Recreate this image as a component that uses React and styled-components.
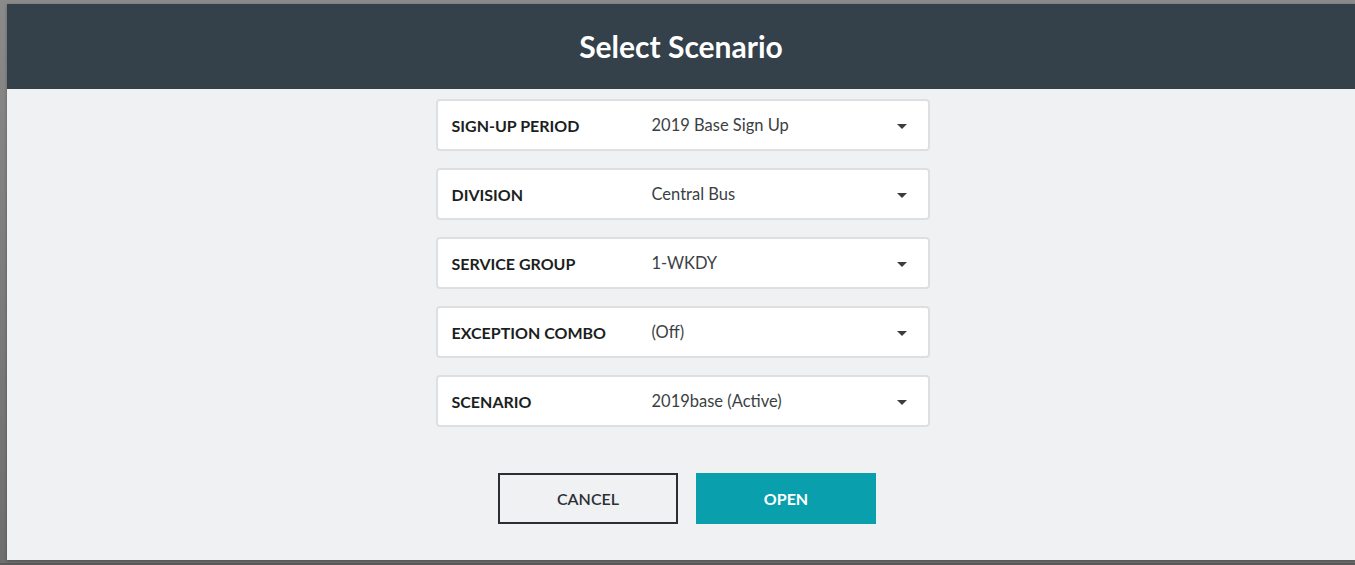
import React from 'react'
import styled, { createGlobalStyle } from 'styled-components'

const GlobalStyle = createGlobalStyle`
  html, body {
    margin: 0;
    padding: 0;
  }
  body {
    font-family: Lato, "Open Sans", sans-serif;
  }
`

const Backdrop = styled.div`
  height: 565px;
  box-sizing: border-box;
  padding: 4px 0 3px 7px;
  background: linear-gradient(#8a8a8a, #6e6e6e);
  border-bottom: 2px solid #5a5a5a;
  display: flex;
`

const Dialog = styled.div`
  flex: 1;
  display: flex;
  flex-direction: column;
  background: #f0f1f3;
  box-shadow: 0 1px 3px rgba(0, 0, 0, 0.3);
`

const Header = styled.div`
  height: 85px;
  background: #34404a;
  display: flex;
  align-items: center;
  justify-content: center;
`

const Title = styled.h1`
  margin: 0 0 2px;
  color: #fff;
  font-size: 30px;
  font-weight: 700;
`

const Body = styled.div`
  display: flex;
  flex-direction: column;
  align-items: center;
  padding: 10px 0 0 3px;
`

const Fields = styled.div`
  display: flex;
  flex-direction: column;
  gap: 17px;
  width: 494px;
`

const Field = styled.div`
  height: 52px;
  box-sizing: border-box;
  background: #fff;
  border: 2px solid #dedfe1;
  border-radius: 4px;
  display: flex;
  align-items: center;
  padding: 0 21px 0 14px;
`

const Label = styled.span`
  width: 200px;
  font-size: 16px;
  font-weight: 700;
  color: #1c1f22;
`

const Value = styled.span`
  flex: 1;
  font-size: 16.5px;
  color: #3b3f43;
`

const Caret = styled.span`
  width: 0;
  height: 0;
  border-left: 5px solid transparent;
  border-right: 5px solid transparent;
  border-top: 5px solid #3a3d40;
  margin-top: 2px;
`

const Actions = styled.div`
  display: flex;
  gap: 18px;
  margin: 46px 0 0 9px;
`

const Button = styled.button`
  width: 180px;
  height: 51px;
  box-sizing: border-box;
  font-family: Lato, "Open Sans", sans-serif;
  font-size: 16px;
  font-weight: ${p => (p.$primary ? 700 : 600)};
  text-transform: uppercase;
  cursor: pointer;
  background: ${p => (p.$primary ? '#0a9fad' : 'transparent')};
  color: ${p => (p.$primary ? '#fff' : '#2c3035')};
  border: ${p => (p.$primary ? 'none' : '2px solid #2a2f34')};
`

const fields = [
  ['SIGN-UP PERIOD', '2019 Base Sign Up'],
  ['DIVISION', 'Central Bus'],
  ['SERVICE GROUP', '1-WKDY'],
  ['EXCEPTION COMBO', '(Off)'],
  ['SCENARIO', '2019base (Active)'],
]

export default function App() {
  return (
    <Backdrop>
      <GlobalStyle />
      <Dialog>
        <Header>
          <Title>Select Scenario</Title>
        </Header>
        <Body>
          <Fields>
            {fields.map(([label, value]) => (
              <Field key={label}>
                <Label>{label}</Label>
                <Value>{value}</Value>
                <Caret />
              </Field>
            ))}
          </Fields>
          <Actions>
            <Button>Cancel</Button>
            <Button $primary>Open</Button>
          </Actions>
        </Body>
      </Dialog>
    </Backdrop>
  )
}
